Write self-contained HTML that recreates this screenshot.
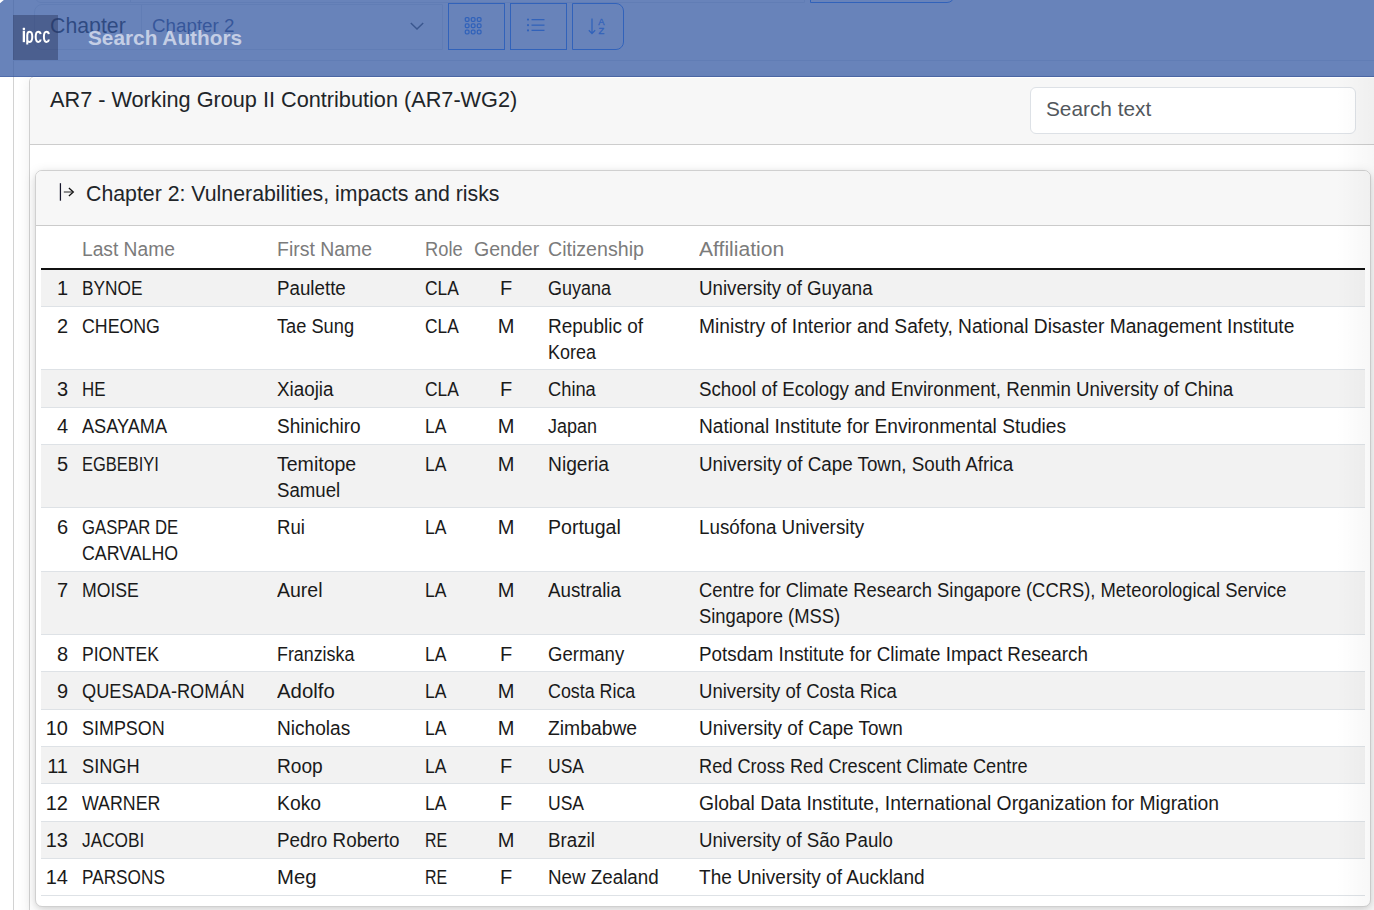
<!DOCTYPE html>
<html><head><meta charset="utf-8">
<style>
html,body{margin:0;padding:0;width:1374px;height:910px;overflow:hidden;background:#fff;font-family:"Liberation Sans",sans-serif;color:#212529;}
*{box-sizing:border-box;}
.abs{position:absolute;}
#vline{left:13px;top:0;width:1px;height:910px;background:#d2d2d2;}
#outer{left:29px;top:76px;width:1400px;height:900px;border:1px solid #d0d0d0;border-radius:6px;background:#fff;box-shadow:0 0 14px rgba(0,0,0,.07);}
#outerhead{left:0;top:0;width:100%;height:68px;background:#f7f7f7;border-bottom:1px solid #cdcdcd;border-radius:5px 5px 0 0;border-top:1px solid #fff;}
#title{left:20px;top:9px;font-size:21.7px;white-space:nowrap;color:#212529;}
#search{left:1000px;top:9px;width:326px;height:47px;border:1px solid #dde1e6;border-radius:6px;background:#fff;}
#search span{position:absolute;left:15px;top:9px;font-size:20.8px;color:#52575c;white-space:nowrap;}
#inner{left:35px;top:170px;width:1336px;height:737px;border:1px solid #d0d0d0;border-radius:7px;background:#fff;box-shadow:0 3px 12px rgba(0,0,0,.15),0 2px 5px rgba(0,0,0,.05);}
#innerhead{left:0;top:0;width:100%;height:55px;background:#f7f7f7;border-bottom:1px solid #cbcbcb;border-radius:6px 6px 0 0;}
#chtitle{left:50px;top:11px;font-size:21.3px;white-space:nowrap;color:#212529;}
#chicon{left:22px;top:12px;}
table{position:absolute;left:5px;top:55px;width:1324px;border-collapse:collapse;table-layout:fixed;font-size:20px;}
th{font-weight:normal;color:#7b7b7b;text-align:left;line-height:25.8px;padding:11.2px 0 4.8px 5px;white-space:nowrap;border-bottom:2px solid #111;}
td{line-height:26.1px;padding:5.6px 0 4.6px 4.6px;vertical-align:top;white-space:nowrap;border-bottom:1px solid #dee2e6;color:#1a1a1a;}
tbody tr:nth-child(odd) td{background:#f2f2f2;}
.c0{text-align:right;padding-left:0;padding-right:9px;}
.c4{text-align:center;padding-left:0;}
th.g{padding-left:5px;text-align:left;}
.sx{display:inline-block;transform-origin:0 50%;}
#overlay{left:0;top:0;width:1374px;height:77px;background:rgba(61,95,166,0.775);border-bottom:1px solid rgba(40,70,140,.35);}
.tb{position:absolute;}
</style></head><body>
<div id="vline" class="abs"></div>
<div id="outer" class="abs">
  <div id="outerhead" class="abs">
    <div id="title" class="abs">AR7 - Working Group II Contribution (AR7-WG2)</div>
    <div id="search" class="abs"><span>Search text</span></div>
  </div>
</div>
<div id="inner" class="abs">
  <div id="innerhead" class="abs">
    <svg id="chicon" class="abs" width="20" height="22" viewBox="0 0 20 22">
      <rect x="1.8" y="0.2" width="1.25" height="17.5" fill="#15152a"/>
      <path d="M5.8 9 H14" stroke="#555" stroke-width="1.3" fill="none"/>
      <path d="M10.9 5.1 L15.3 9 L10.9 12.9" stroke="#111" stroke-width="1.3" fill="none"/>
    </svg>
    <div id="chtitle" class="abs">Chapter 2: Vulnerabilities, impacts and risks</div>
  </div>
  <table>
    <colgroup><col style="width:36px"><col style="width:195px"><col style="width:148px"><col style="width:49px"><col style="width:74px"><col style="width:151px"><col></colgroup>
    <thead><tr><th class="c0"></th><th><span class='sx' style='transform:scaleX(0.9596)'>Last Name</span></th><th><span class='sx' style='transform:scaleX(0.9730)'>First Name</span></th><th><span class='sx' style='transform:scaleX(0.9154)'>Role</span></th><th class='g'><span class='sx' style='transform:scaleX(0.9785)'>Gender</span></th><th><span class='sx' style='transform:scaleX(0.9802)'>Citizenship</span></th><th><span class='sx' style='transform:scaleX(1.0539)'>Affiliation</span></th></tr></thead>
    <tbody>
<tr><td class='c0'>1</td><td class='c1'><span class='sx' style='transform:scaleX(0.8641)'>BYNOE</span></td><td class='c2'><span class='sx' style='transform:scaleX(0.9371)'>Paulette</span></td><td class='c3'><span class='sx' style='transform:scaleX(0.8698)'>CLA</span></td><td class='c4'>F</td><td class='c5'><span class='sx' style='transform:scaleX(0.8978)'>Guyana</span></td><td class='c6'><span class='sx' style='transform:scaleX(0.9350)'>University of Guyana</span></td></tr>
<tr><td class='c0'>2</td><td class='c1'><span class='sx' style='transform:scaleX(0.8876)'>CHEONG</span></td><td class='c2'><span class='sx' style='transform:scaleX(0.9114)'>Tae Sung</span></td><td class='c3'><span class='sx' style='transform:scaleX(0.8671)'>CLA</span></td><td class='c4'>M</td><td class='c5'><span class='sx' style='transform:scaleX(0.9497)'>Republic of</span><br><span class='sx' style='transform:scaleX(0.8972)'>Korea</span></td><td class='c6'><span class='sx' style='transform:scaleX(0.9604)'>Ministry of Interior and Safety, National Disaster Management Institute</span></td></tr>
<tr><td class='c0'>3</td><td class='c1'><span class='sx' style='transform:scaleX(0.8453)'>HE</span></td><td class='c2'><span class='sx' style='transform:scaleX(0.9412)'>Xiaojia</span></td><td class='c3'><span class='sx' style='transform:scaleX(0.8698)'>CLA</span></td><td class='c4'>F</td><td class='c5'><span class='sx' style='transform:scaleX(0.9146)'>China</span></td><td class='c6'><span class='sx' style='transform:scaleX(0.9368)'>School of Ecology and Environment, Renmin University of China</span></td></tr>
<tr><td class='c0'>4</td><td class='c1'><span class='sx' style='transform:scaleX(0.9080)'>ASAYAMA</span></td><td class='c2'><span class='sx' style='transform:scaleX(0.9526)'>Shinichiro</span></td><td class='c3'><span class='sx' style='transform:scaleX(0.8766)'>LA</span></td><td class='c4'>M</td><td class='c5'><span class='sx' style='transform:scaleX(0.8972)'>Japan</span></td><td class='c6'><span class='sx' style='transform:scaleX(0.9569)'>National Institute for Environmental Studies</span></td></tr>
<tr><td class='c0'>5</td><td class='c1'><span class='sx' style='transform:scaleX(0.8230)'>EGBEBIYI</span></td><td class='c2'><span class='sx' style='transform:scaleX(0.9761)'>Temitope</span><br><span class='sx' style='transform:scaleX(0.9329)'>Samuel</span></td><td class='c3'><span class='sx' style='transform:scaleX(0.8766)'>LA</span></td><td class='c4'>M</td><td class='c5'><span class='sx' style='transform:scaleX(0.9617)'>Nigeria</span></td><td class='c6'><span class='sx' style='transform:scaleX(0.9400)'>University of Cape Town, South Africa</span></td></tr>
<tr><td class='c0'>6</td><td class='c1'><span class='sx' style='transform:scaleX(0.8352)'>GASPAR DE</span><br><span class='sx' style='transform:scaleX(0.8891)'>CARVALHO</span></td><td class='c2'><span class='sx' style='transform:scaleX(0.9284)'>Rui</span></td><td class='c3'><span class='sx' style='transform:scaleX(0.8766)'>LA</span></td><td class='c4'>M</td><td class='c5'><span class='sx' style='transform:scaleX(0.9779)'>Portugal</span></td><td class='c6'><span class='sx' style='transform:scaleX(0.9398)'>Lusófona University</span></td></tr>
<tr><td class='c0'>7</td><td class='c1'><span class='sx' style='transform:scaleX(0.8816)'>MOISE</span></td><td class='c2'><span class='sx' style='transform:scaleX(0.9754)'>Aurel</span></td><td class='c3'><span class='sx' style='transform:scaleX(0.8766)'>LA</span></td><td class='c4'>M</td><td class='c5'><span class='sx' style='transform:scaleX(0.9374)'>Australia</span></td><td class='c6'><span class='sx' style='transform:scaleX(0.9192)'>Centre for Climate Research Singapore (CCRS), Meteorological Service</span><br><span class='sx' style='transform:scaleX(0.9207)'>Singapore (MSS)</span></td></tr>
<tr><td class='c0'>8</td><td class='c1'><span class='sx' style='transform:scaleX(0.8762)'>PIONTEK</span></td><td class='c2'><span class='sx' style='transform:scaleX(0.8924)'>Franziska</span></td><td class='c3'><span class='sx' style='transform:scaleX(0.8766)'>LA</span></td><td class='c4'>F</td><td class='c5'><span class='sx' style='transform:scaleX(0.9263)'>Germany</span></td><td class='c6'><span class='sx' style='transform:scaleX(0.9404)'>Potsdam Institute for Climate Impact Research</span></td></tr>
<tr><td class='c0'>9</td><td class='c1'><span class='sx' style='transform:scaleX(0.9093)'>QUESADA-ROMÁN</span></td><td class='c2'><span class='sx' style='transform:scaleX(1.0180)'>Adolfo</span></td><td class='c3'><span class='sx' style='transform:scaleX(0.8766)'>LA</span></td><td class='c4'>M</td><td class='c5'><span class='sx' style='transform:scaleX(0.8922)'>Costa Rica</span></td><td class='c6'><span class='sx' style='transform:scaleX(0.9270)'>University of Costa Rica</span></td></tr>
<tr><td class='c0'>10</td><td class='c1'><span class='sx' style='transform:scaleX(0.8972)'>SIMPSON</span></td><td class='c2'><span class='sx' style='transform:scaleX(0.9549)'>Nicholas</span></td><td class='c3'><span class='sx' style='transform:scaleX(0.8766)'>LA</span></td><td class='c4'>M</td><td class='c5'><span class='sx' style='transform:scaleX(0.9658)'>Zimbabwe</span></td><td class='c6'><span class='sx' style='transform:scaleX(0.9461)'>University of Cape Town</span></td></tr>
<tr><td class='c0'>11</td><td class='c1'><span class='sx' style='transform:scaleX(0.9108)'>SINGH</span></td><td class='c2'><span class='sx' style='transform:scaleX(0.9569)'>Roop</span></td><td class='c3'><span class='sx' style='transform:scaleX(0.8766)'>LA</span></td><td class='c4'>F</td><td class='c5'><span class='sx' style='transform:scaleX(0.8763)'>USA</span></td><td class='c6'><span class='sx' style='transform:scaleX(0.9096)'>Red Cross Red Crescent Climate Centre</span></td></tr>
<tr><td class='c0'>12</td><td class='c1'><span class='sx' style='transform:scaleX(0.8890)'>WARNER</span></td><td class='c2'><span class='sx' style='transform:scaleX(0.9680)'>Koko</span></td><td class='c3'><span class='sx' style='transform:scaleX(0.8766)'>LA</span></td><td class='c4'>F</td><td class='c5'><span class='sx' style='transform:scaleX(0.8763)'>USA</span></td><td class='c6'><span class='sx' style='transform:scaleX(0.9664)'>Global Data Institute, International Organization for Migration</span></td></tr>
<tr><td class='c0'>13</td><td class='c1'><span class='sx' style='transform:scaleX(0.8632)'>JACOBI</span></td><td class='c2'><span class='sx' style='transform:scaleX(0.9424)'>Pedro Roberto</span></td><td class='c3'><span class='sx' style='transform:scaleX(0.7957)'>RE</span></td><td class='c4'>M</td><td class='c5'><span class='sx' style='transform:scaleX(0.9361)'>Brazil</span></td><td class='c6'><span class='sx' style='transform:scaleX(0.9322)'>University of São Paulo</span></td></tr>
<tr><td class='c0'>14</td><td class='c1'><span class='sx' style='transform:scaleX(0.8602)'>PARSONS</span></td><td class='c2'><span class='sx' style='transform:scaleX(1.0143)'>Meg</span></td><td class='c3'><span class='sx' style='transform:scaleX(0.7957)'>RE</span></td><td class='c4'>F</td><td class='c5'><span class='sx' style='transform:scaleX(0.9394)'>New Zealand</span></td><td class='c6'><span class='sx' style='transform:scaleX(0.9531)'>The University of Auckland</span></td></tr>

    </tbody>
  </table>
</div>
<!-- toolbar under overlay -->
<div class="tb" style="left:35px;top:-20px;width:770px;height:23px;border:1px solid #dee2e6;border-radius:0 0 0 6px;"></div>
<div class="tb" style="left:130px;top:0;width:1px;height:2px;background:#dee2e6;"></div>
<div class="tb" style="left:810px;top:-20px;width:145px;height:23px;border:1.5px solid #0d6efd;border-radius:0 0 8px 0;"></div>
<div class="tb" style="left:13px;top:60px;width:1361px;height:1px;background:#dee2e6;"></div>
<div class="tb" style="left:34px;top:4px;width:409px;height:46px;border:1px solid #dee2e6;border-radius:8px 0 0 8px;"></div>
<div class="tb" style="left:141px;top:4px;width:1px;height:46px;background:#dee2e6;"></div>
<div class="tb" style="left:50px;top:14px;font-size:21.3px;color:#000;white-space:nowrap;">Chapter</div>
<div class="tb" style="left:152px;top:15px;font-size:18.8px;color:#223870;white-space:nowrap;">Chapter 2</div>
<svg class="tb" style="left:408px;top:20px" width="18" height="12" viewBox="0 0 18 12"><path d="M2.8 3 L9 9 L15.2 3" stroke="#343a40" stroke-width="1.5" fill="none"/></svg>
<div class="tb" style="left:448px;top:3px;width:57px;height:47px;border:1.5px solid #0d6efd;"></div>
<div class="tb" style="left:510px;top:3px;width:57px;height:47px;border:1.5px solid #0d6efd;"></div>
<div class="tb" style="left:572px;top:3px;width:52px;height:47px;border:1.5px solid #0d6efd;border-radius:0 8px 8px 0;"></div>
<svg class="tb" style="left:462px;top:15px" width="24" height="22" viewBox="0 0 24 22">
  <g fill="none" stroke="#0d6efd" stroke-width="1.3"><rect x="3.3" y="2.6" width="3.7" height="3.7" rx="1.1"/><rect x="9.3" y="2.6" width="3.7" height="3.7" rx="1.1"/><rect x="15.3" y="2.6" width="3.7" height="3.7" rx="1.1"/><rect x="3.3" y="8.9" width="3.7" height="3.7" rx="1.1"/><rect x="9.3" y="8.9" width="3.7" height="3.7" rx="1.1"/><rect x="15.3" y="8.9" width="3.7" height="3.7" rx="1.1"/><rect x="3.3" y="15.2" width="3.7" height="3.7" rx="1.1"/><rect x="9.3" y="15.2" width="3.7" height="3.7" rx="1.1"/><rect x="15.3" y="15.2" width="3.7" height="3.7" rx="1.1"/></g></svg>
<svg class="tb" style="left:524px;top:15px" width="24" height="22" viewBox="0 0 24 22">
  <g fill="#0d6efd"><circle cx="4" cy="4.6" r="1.1"/><circle cx="4" cy="10.2" r="1.1"/><circle cx="4" cy="15.4" r="1.1"/>
  <rect x="7.5" y="4" width="13" height="1.3"/><rect x="7.5" y="9.5" width="13" height="1.3"/><rect x="7.5" y="14.7" width="13" height="1.3"/></g></svg>
<svg class="tb" style="left:586px;top:15px" width="24" height="22" viewBox="0 0 24 22">
  <path d="M6 3.5 V18.5 M2.8 15.2 L6 18.5 L9.2 15.2" stroke="#0d6efd" stroke-width="1.3" fill="none"/>
  <text x="12.3" y="10.2" font-size="9.5" font-family="Liberation Sans" fill="#0d6efd" stroke="#0d6efd" stroke-width="0.3">A</text>
  <text x="12.6" y="18.8" font-size="9.5" font-family="Liberation Sans" fill="#0d6efd" stroke="#0d6efd" stroke-width="0.3">Z</text>
</svg>
<div class="abs" style="left:1336px;top:77px;width:38px;height:833px;background:linear-gradient(to right,rgba(0,0,0,0),rgba(0,0,0,.03));"></div>
<div id="overlay" class="abs"></div>
<div class="abs" style="left:13px;top:15px;width:45px;height:45px;background:rgba(40,50,90,0.45);"></div>
<svg class="abs" style="left:13px;top:15px" width="45" height="45" viewBox="0 0 45 45">
  <g fill="none" stroke="#fff" stroke-width="2">
   <path d="M10.87 15.7 V27.15" stroke-width="2.3"/>
   <path d="M14.25 29.6 V20.2 C14.25 17.8 15.3 16.75 16.75 16.75 C18.5 16.75 19.25 18.5 19.25 21.85 C19.25 25.2 18.5 26.95 16.75 26.95 C15.5 26.95 14.6 26.2 14.25 25.3"/>
   <path d="M27.6 19.2 C27.4 17.6 26.5 16.8 25.2 16.8 C23.4 16.8 22.7 18.6 22.7 21.85 C22.7 25.1 23.4 26.9 25.2 26.9 C26.5 26.9 27.4 26.1 27.6 24.5"/>
   <path d="M35.8 19.2 C35.6 17.6 34.7 16.8 33.4 16.8 C31.6 16.8 30.9 18.6 30.9 21.85 C30.9 25.1 31.6 26.9 33.4 26.9 C34.7 26.9 35.6 26.1 35.8 24.5"/>
  </g>
  <rect x="9.7" y="12.7" width="2.35" height="2.25" rx="0.4" fill="#fff"/>
</svg>
<div class="abs" style="left:88px;top:26px;font-size:20.8px;font-weight:bold;color:#c4cee5;white-space:nowrap;">Search Authors</div>
<svg class="abs" style="left:0;top:0" width="6" height="6"><polygon points="0,0 3.8,0 0,3.3" fill="#fff"/></svg>
</body></html>
